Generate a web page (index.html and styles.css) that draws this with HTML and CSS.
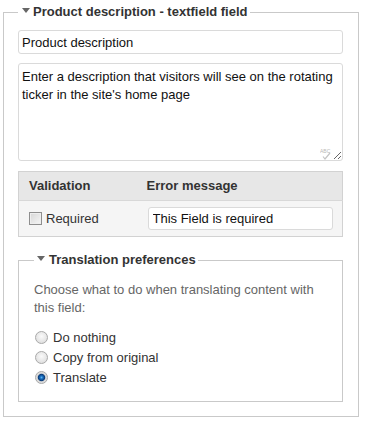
FILE: index.html
```html
<!DOCTYPE html>
<html lang="en">
<head>
<meta charset="UTF-8">
<title>Product description - textfield field</title>
<link rel="stylesheet" href="styles.css">
</head>
<body>
<fieldset class="field-box">
    <legend class="box-title"><span class="arrow"></span>Product description - textfield field</legend>

    <input type="text" class="text-input" value="Product description">

    <div class="area-wrap">
        <textarea class="text-area">Enter a description that visitors will see on the rotating ticker in the site's home page</textarea>
        <svg class="spell-icon" width="13" height="12" viewBox="0 0 13 12">
            <text x="0" y="5" font-family="Liberation Sans, sans-serif" font-size="5" fill="#b8b8b8">ABC</text>
            <path d="M3 8.5 L5 11 L10 5" fill="none" stroke="#c4c4c4" stroke-width="1.2"/>
        </svg>
    </div>

    <table class="valid-table">
        <tr>
            <th class="col-valid">Validation</th>
            <th>Error message</th>
        </tr>
        <tr>
            <td class="col-valid">
                <label class="check-label"><input type="checkbox" class="check"> Required</label>
            </td>
            <td>
                <input type="text" class="text-input error-input" value="This Field is required">
            </td>
        </tr>
    </table>

    <fieldset class="field-box inner-box">
        <legend class="box-title"><span class="arrow"></span>Translation preferences</legend>
        <p class="help">Choose what to do when translating content with this field:</p>
        <label class="radio-label"><input type="radio" name="tr" class="radio"> Do nothing</label>
        <label class="radio-label"><input type="radio" name="tr" class="radio"> Copy from original</label>
        <label class="radio-label"><input type="radio" name="tr" class="radio" checked> Translate</label>
    </fieldset>
</fieldset>
</body>
</html>
```

FILE: styles.css
```css
* {
    box-sizing: border-box;
}
body {
    margin: 0;
    background: #fff;
    font-family: 'Liberation Sans', Arial, sans-serif;
    font-size: 13px;
    color: #333;
}
.field-box {
    margin: 4px 6px 9px 3px;
    padding: 10px 15px 14px 14px;
    border: 1px solid #c9c9c9;
    min-width: 0;
}
.box-title {
    padding: 0 2px 0 4px;
    line-height: 16px;
    font-weight: bold;
    font-size: 13px;
    color: #333;
}
.arrow {
    display: inline-block;
    width: 0;
    height: 0;
    border-left: 4px solid transparent;
    border-right: 4px solid transparent;
    border-top: 5px solid #666;
    margin-right: 3px;
    vertical-align: 3px;
}
.text-input {
    display: block;
    width: 100%;
    height: 24px;
    padding: 0 3px;
    border: 1px solid #dadada;
    border-radius: 3px;
    font-family: 'Liberation Sans', Arial, sans-serif;
    font-size: 13px;
    color: #111;
    background: #fff;
}
.area-wrap {
    position: relative;
    margin-top: 9px;
}
.text-area {
    display: block;
    width: 100%;
    height: 98px;
    padding: 4px 3px;
    border: 1px solid #dadada;
    border-radius: 3px;
    font-family: 'Liberation Sans', Arial, sans-serif;
    font-size: 13px;
    line-height: 18px;
    color: #111;
    resize: vertical;
}
.spell-icon {
    position: absolute;
    right: 10px;
    bottom: 1px;
}
.valid-table {
    width: 100%;
    margin-top: 10px;
    border-collapse: collapse;
    border: 1px solid #d2d2d2;
}
.valid-table th {
    background: #e7e7e7;
    text-align: left;
    padding: 6px 10px;
    line-height: 16px;
    border-bottom: 1px solid #d8d8d8;
    color: #333;
}
.valid-table td {
    background: #f5f5f5;
    padding: 6px 9px 6px 11px;
}
.valid-table .col-valid {
    width: 118px;
    padding-left: 10px;
}
.error-input {
    height: 23px;
    padding: 0 4px;
}
.check-label {
    display: flex;
    align-items: center;
    gap: 4px;
    color: #333;
}
.check {
    appearance: none;
    width: 13px;
    height: 13px;
    margin: 0;
    border: 1px solid #8e8e8e;
    background: linear-gradient(135deg, #d6d6d6, #f6f6f6);
    box-shadow: inset 0 0 0 1px #eee;
}
.inner-box {
    margin: 15px 0 0 0;
    padding: 13px 15px 14px 15px;
}
.inner-box .box-title {
    padding-left: 3px;
}
.inner-box .arrow {
    margin-right: 4px;
}
.help {
    margin: 0 0 10px;
    line-height: 18px;
    color: #666;
}
.radio-label {
    display: flex;
    align-items: center;
    height: 20px;
    color: #333;
}
.radio {
    appearance: none;
    width: 13px;
    height: 13px;
    margin: 0 5px 0 1px;
    border-radius: 50%;
    border: 1px solid #a9a9a9;
    background: radial-gradient(circle at 50% 40%, #fafafa 0, #e2e2e2 70%, #d4d4d4 100%);
}
.radio:checked {
    background: radial-gradient(circle at 50% 50%, #5fb5ee 0, #1a6fc0 1.5px, #0c3d7a 3.2px, #d6d6d6 4.2px, #f0f0f0 100%);
}
```
